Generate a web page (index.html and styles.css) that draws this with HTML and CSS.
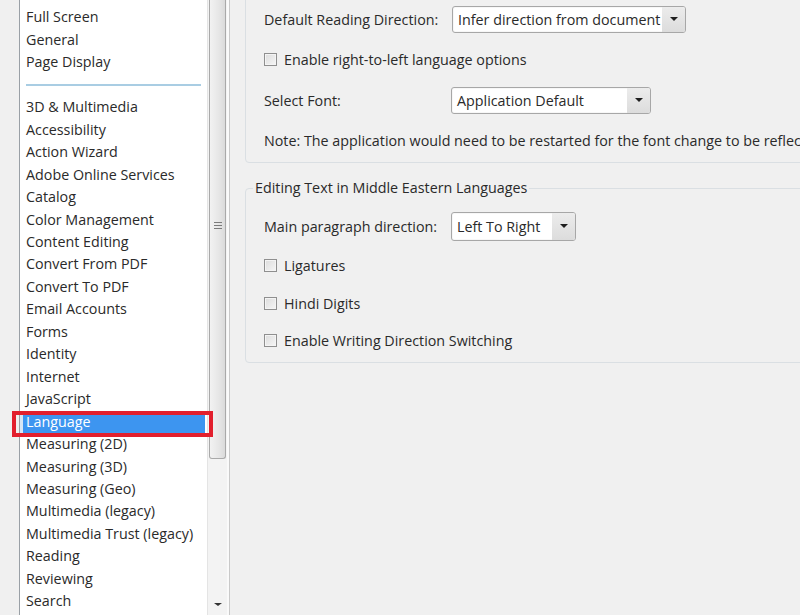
FILE: index.html
```html
<!DOCTYPE html>
<html>
<head>
<meta charset="utf-8">
<link rel="stylesheet" href="styles.css">
</head>
<body>
<div class="app">
  <aside class="sidebar">
    <div class="listbox">
      <ul class="list">
        <li>Documents</li>
        <li>Full Screen</li>
        <li>General</li>
        <li>Page Display</li>
        <li class="sep"></li>
        <li>3D &amp; Multimedia</li>
        <li>Accessibility</li>
        <li>Action Wizard</li>
        <li>Adobe Online Services</li>
        <li>Catalog</li>
        <li>Color Management</li>
        <li>Content Editing</li>
        <li>Convert From PDF</li>
        <li>Convert To PDF</li>
        <li>Email Accounts</li>
        <li>Forms</li>
        <li>Identity</li>
        <li>Internet</li>
        <li>JavaScript</li>
        <li class="selected">Language</li>
        <li>Measuring (2D)</li>
        <li>Measuring (3D)</li>
        <li>Measuring (Geo)</li>
        <li>Multimedia (legacy)</li>
        <li>Multimedia Trust (legacy)</li>
        <li>Reading</li>
        <li>Reviewing</li>
        <li>Search</li>
      </ul>
      <div class="scrollbar">
        <div class="thumb"><span class="grip"></span></div>
        <div class="track"></div>
        <div class="arrow-down"></div>
      </div>
    </div>
  </aside>
  <main class="content">
    <section class="group group-top">
      <div class="row">
        <span class="label">Default Reading Direction:</span>
        <div class="dropdown dd-wide"><span class="dd-text">Infer direction from document</span><span class="dd-btn"><span class="tri"></span></span></div>
      </div>
      <div class="row">
        <span class="checkbox"></span><span class="cb-label">Enable right-to-left language options</span>
      </div>
      <div class="row">
        <span class="label">Select Font:</span>
        <div class="dropdown dd-font"><span class="dd-text">Application Default</span><span class="dd-btn"><span class="tri"></span></span></div>
      </div>
      <div class="row">
        <span class="note">Note: The application would need to be restarted for the font change to be reflected.</span>
      </div>
    </section>
    <fieldset class="group group-me">
      <legend>Editing Text in Middle Eastern Languages</legend>
      <div class="row row-first">
        <span class="label">Main paragraph direction:</span>
        <div class="dropdown dd-dir"><span class="dd-text">Left To Right</span><span class="dd-btn"><span class="tri"></span></span></div>
      </div>
      <div class="row row-cb">
        <span class="checkbox"></span><span class="cb-label">Ligatures</span>
      </div>
      <div class="row row-cb">
        <span class="checkbox"></span><span class="cb-label">Hindi Digits</span>
      </div>
      <div class="row row-cb">
        <span class="checkbox"></span><span class="cb-label">Enable Writing Direction Switching</span>
      </div>
    </fieldset>
  </main>
</div>
</body>
</html>
```
FILE: styles.css
```css
html, body {
  margin: 0;
  padding: 0;
  width: 800px;
  height: 615px;
  overflow: hidden;
  background: #f0f0f0;
  font-family: "Open Sans", "Noto Sans", sans-serif;
  font-size: 14.3px;
  color: #2a2a2a;
}

.app {
  display: flex;
  height: 615px;
  overflow: hidden;
}

/* ---------- sidebar ---------- */
.sidebar {
  flex: 0 0 230px;
  box-sizing: border-box;
  padding-left: 19px;
  border-right: 1px solid #c9c9c9;
  box-shadow: inset -3px 0 0 #fafafa;
}

.listbox {
  display: flex;
  height: 615px;
  border-left: 1px solid #9aa0a6;
}

.list {
  width: 181px;
  margin: 0;
  padding: 0 0 0 6px;
  list-style: none;
  background: #fff;
  overflow: visible;
}

.list li {
  height: 22.46px;
  line-height: 22.46px;
  white-space: nowrap;
}

.list li:first-child {
  margin-top: -16px;
}

.list li.sep {
  display: flex;
  align-items: center;
  padding-right: 6px;
}

.list li.sep::before {
  content: "";
  flex: 1;
  height: 2px;
  background: #a9cde3;
}

.list li.selected {
  position: relative;
  z-index: 2;
  margin-left: -6px;
  margin-right: 2px;
  padding-left: 3px;
  color: #fff;
  background: #3d95f0;
  border-left: 3px solid #d7e6f5;
}

.list li.selected::after {
  content: "";
  position: absolute;
  left: -11px;
  right: -8px;
  top: 0;
  bottom: -4px;
  border: 4px solid #e21f2d;
}

/* ---------- scrollbar ---------- */
.scrollbar {
  width: 19px;
  display: flex;
  flex-direction: column;
  background: #f3f3f3;
  border-left: 1px solid #e4e4e4;
}

.thumb {
  height: 458px;
  margin: 0 1px 0 1px;
  border: 1px solid #a9a9a9;
  border-top: none;
  border-radius: 0 0 3px 3px;
  background: linear-gradient(to right, #f2f2f2, #e6e6e6 60%, #dadada);
  display: flex;
  align-items: center;
  justify-content: center;
}

.grip {
  width: 8px;
  height: 9px;
  background: repeating-linear-gradient(to bottom, #7b7b7b 0 1px, transparent 1px 3px);
  margin-top: -6px;
}

.track {
  flex: 1;
}

.arrow-down {
  height: 14px;
  display: flex;
  justify-content: center;
  align-items: flex-start;
}

.arrow-down::before {
  content: "";
  border-left: 4px solid transparent;
  border-right: 4px solid transparent;
  border-top: 3px solid #333;
  margin-top: 2px;
}

/* ---------- content ---------- */
.content {
  flex: 0 0 auto;
  width: 600px;
  padding-left: 15px;
}

.group {
  width: 620px;
  box-sizing: border-box;
  border: 1px solid #dadfe3;
  border-radius: 4px;
}

.group-top {
  margin-top: -11px;
  padding: 9px 0 1px 18px;
}

.row {
  display: flex;
  align-items: center;
  height: 40.5px;
  white-space: nowrap;
}

.label {
  width: 187px;
  flex: 0 0 187px;
}

.dropdown {
  display: flex;
  align-items: stretch;
  height: 27px;
  box-sizing: border-box;
  border: 1px solid #a7a7a7;
  border-radius: 3px;
  background: #fff;
  box-shadow: inset 0 0 0 1px #f7f7f7;
}

.dd-text {
  flex: 1;
  padding-left: 5px;
  line-height: 25px;
  overflow: hidden;
}

.dd-btn {
  flex: 0 0 23px;
  display: flex;
  align-items: center;
  justify-content: center;
  background: linear-gradient(to bottom, #ececec, #dcdcdc);
  border-radius: 0 2px 2px 0;
}

.tri {
  width: 0;
  height: 0;
  border-left: 4px solid transparent;
  border-right: 4px solid transparent;
  border-top: 4px solid #1e1e1e;
}

.dd-wide { width: 234px; margin-left: 1px; }
.dd-font { width: 200px; }
.dd-dir { width: 125px; height: 29px; }
.dd-dir .dd-text { line-height: 27px; }

.checkbox {
  width: 13px;
  height: 13px;
  box-sizing: border-box;
  border: 1px solid #8f8f8f;
  background: linear-gradient(135deg, #dcdcdc, #f6f6f6);
  box-shadow: inset 0 0 0 1px #f4f4f4;
  margin-right: 7px;
}

.group-me {
  margin: 15px 0 0 0;
  padding: 7px 0 2px 18px;
  min-width: 0;
}

.group-me legend {
  margin-left: -11px;
  padding: 0 2px;
  line-height: 20px;
}

.row-first {
  height: 42px;
}

.row-cb {
  height: 37.5px;
}
```
